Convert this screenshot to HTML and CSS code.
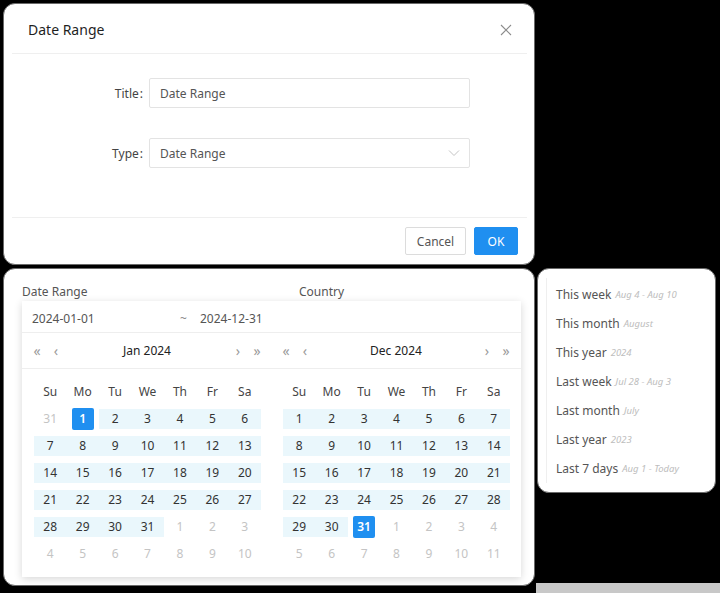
FILE: index.html
```html
<!DOCTYPE html>
<html lang="en">
<head>
<meta charset="utf-8">
<title>Date Range</title>
<link rel="stylesheet" href="styles.css">
</head>
<body>
<div class="page">
  <section class="card modal">
    <header class="modal-head">
      <span class="modal-title">Date Range</span>
      <svg class="close" width="12" height="12" viewBox="0 0 12 12"><path d="M1 1L11 11M11 1L1 11" stroke="#8c8c8c" stroke-width="1.1" fill="none"/></svg>
    </header>
    <div class="divider"></div>
    <div class="form">
      <div class="row"><span class="label">Title</span><div class="input">Date Range</div></div>
      <div class="row"><span class="label">Type</span><div class="input select">Date Range<svg class="chev" width="12" height="8" viewBox="0 0 12 8"><path d="M1 1.5L6 6.5L11 1.5" stroke="#c4c4c4" stroke-width="1" fill="none"/></svg></div></div>
    </div>
    <div class="divider"></div>
    <footer class="modal-foot">
      <button class="btn">Cancel</button>
      <button class="btn primary">OK</button>
    </footer>
  </section>

  <div class="bottom">
    <section class="card filter">
      <div class="labels"><span class="flabel">Date Range</span><span class="flabel country">Country</span></div>
      <div class="picker">
        <div class="range-inputs"><span class="ri">2024-01-01</span><span class="tilde">~</span><span class="ri">2024-12-31</span></div>
        <div class="panels-head">
          <div class="phead"><span class="nav">«</span><span class="nav">‹</span><span class="ptitle">Jan 2024</span><span class="nav">›</span><span class="nav">»</span></div>
          <div class="phead"><span class="nav">«</span><span class="nav">‹</span><span class="ptitle">Dec 2024</span><span class="nav">›</span><span class="nav">»</span></div>
        </div>
        <div class="panels">
          <div class="grid">
            <span class="wd">Su</span><span class="wd">Mo</span><span class="wd">Tu</span><span class="wd">We</span><span class="wd">Th</span><span class="wd">Fr</span><span class="wd">Sa</span>
            <span class="d out">31</span><span class="d sel"><b>1</b></span><span class="d in">2</span><span class="d in">3</span><span class="d in">4</span><span class="d in">5</span><span class="d in">6</span>
            <span class="d in">7</span><span class="d in">8</span><span class="d in">9</span><span class="d in">10</span><span class="d in">11</span><span class="d in">12</span><span class="d in">13</span>
            <span class="d in">14</span><span class="d in">15</span><span class="d in">16</span><span class="d in">17</span><span class="d in">18</span><span class="d in">19</span><span class="d in">20</span>
            <span class="d in">21</span><span class="d in">22</span><span class="d in">23</span><span class="d in">24</span><span class="d in">25</span><span class="d in">26</span><span class="d in">27</span>
            <span class="d in">28</span><span class="d in">29</span><span class="d in">30</span><span class="d in">31</span><span class="d out">1</span><span class="d out">2</span><span class="d out">3</span>
            <span class="d out">4</span><span class="d out">5</span><span class="d out">6</span><span class="d out">7</span><span class="d out">8</span><span class="d out">9</span><span class="d out">10</span>
          </div>
          <div class="grid">
            <span class="wd">Su</span><span class="wd">Mo</span><span class="wd">Tu</span><span class="wd">We</span><span class="wd">Th</span><span class="wd">Fr</span><span class="wd">Sa</span>
            <span class="d in">1</span><span class="d in">2</span><span class="d in">3</span><span class="d in">4</span><span class="d in">5</span><span class="d in">6</span><span class="d in">7</span>
            <span class="d in">8</span><span class="d in">9</span><span class="d in">10</span><span class="d in">11</span><span class="d in">12</span><span class="d in">13</span><span class="d in">14</span>
            <span class="d in">15</span><span class="d in">16</span><span class="d in">17</span><span class="d in">18</span><span class="d in">19</span><span class="d in">20</span><span class="d in">21</span>
            <span class="d in">22</span><span class="d in">23</span><span class="d in">24</span><span class="d in">25</span><span class="d in">26</span><span class="d in">27</span><span class="d in">28</span>
            <span class="d in">29</span><span class="d in">30</span><span class="d sel"><b>31</b></span><span class="d out">1</span><span class="d out">2</span><span class="d out">3</span><span class="d out">4</span>
            <span class="d out">5</span><span class="d out">6</span><span class="d out">7</span><span class="d out">8</span><span class="d out">9</span><span class="d out">10</span><span class="d out">11</span>
          </div>
        </div>
      </div>
    </section>

    <aside class="side">
      <div class="card presets">
        <ul class="plist">
          <li>This week <em>Aug 4 - Aug 10</em></li>
          <li>This month <em>August</em></li>
          <li>This year <em>2024</em></li>
          <li>Last week <em>Jul 28 - Aug 3</em></li>
          <li>Last month <em>July</em></li>
          <li>Last year <em>2023</em></li>
          <li>Last 7 days <em>Aug 1 - Today</em></li>
        </ul>
      </div>
      <div class="strip"></div>
    </aside>
  </div>
</div>
</body>
</html>
```

FILE: styles.css
```css
* { box-sizing: border-box; }
html, body { margin: 0; padding: 0; }
body {
  background: #000;
  width: 720px;
  height: 593px;
  overflow: hidden;
  font-family: "Noto Sans", "Open Sans", sans-serif;
  color: #333;
}
.page { padding: 3px 0 0 3px; }

.card {
  background: #fff;
  border: 1px solid #6a6a6a;
  border-radius: 12px;
}

/* ---------- modal ---------- */
.modal {
  width: 532px;
  height: 262px;
  display: flex;
  flex-direction: column;
}
.modal-head {
  height: 49px;
  display: flex;
  align-items: center;
  justify-content: space-between;
  padding: 2px 22px 0 24px;
}
.modal-title { font-size: 14px; font-weight: 400; color: #1f1f1f; }
.divider { height: 1px; background: #efefef; margin: 0 7px 0 8px; }
.form {
  height: 163px;
  padding-top: 24px;
  display: flex;
  flex-direction: column;
  gap: 30px;
}
.row { display: flex; align-items: center; height: 30px; }
.label {
  width: 145px;
  flex-shrink: 0;
  text-align: right;
  font-size: 12px;
  color: #444;
  padding-right: 6px;
}
.label::after { content: ":"; margin-left: 1px; }
.input {
  width: 321px;
  height: 30px;
  border: 1px solid #e3e3e3;
  border-radius: 2px;
  font-size: 12px;
  color: #555;
  display: flex;
  align-items: center;
  padding: 0 10px;
}
.select { justify-content: space-between; padding-right: 9px; }
.modal-foot {
  flex: 1;
  display: flex;
  justify-content: flex-end;
  align-items: flex-start;
  gap: 8px;
  padding: 9px 16px 0 0;
}
.btn {
  height: 28px;
  font-family: inherit;
  font-size: 12px;
  border-radius: 2px;
  border: 1px solid #dcdcdc;
  background: #fff;
  color: #555;
  padding: 0;
  width: 61px;
}
.btn.primary {
  background: #1f8ff0;
  border-color: #1f8ff0;
  color: #fff;
  width: 44px;
}

/* ---------- bottom ---------- */
.bottom { display: flex; gap: 2px; margin-top: 3px; }
.filter {
  width: 532px;
  height: 318px;
  padding: 12px 0 0 18px;
}
.labels { display: flex; height: 20px; align-items: center; }
.flabel { font-size: 12px; color: #555; width: 277px; flex-shrink: 0; }
.picker {
  width: 499px;
  height: 276px;
  background: #fff;
  box-shadow: 0 2px 8px rgba(0,0,0,0.16);
}
.range-inputs {
  height: 32px;
  display: flex;
  align-items: center;
  padding: 4px 0 0 10px;
  font-size: 12px;
  color: #555;
  border-bottom: 1px solid #eeeeee;
}
.ri:first-child { width: 148px; }
.tilde { width: 20px; color: #888; }
.panels-head {
  display: flex;
  height: 36px;
  border-bottom: 1px solid #eeeeee;
}
.phead {
  width: 249px;
  display: flex;
  align-items: center;
  padding: 0 7px 0 8px;
  gap: 5px;
}
.nav { width: 14px; text-align: center; color: #9a9a9a; font-size: 14px; line-height: 1; }
.ptitle { flex: 1; text-align: center; font-size: 12px; font-weight: 400; color: #222; }
.panels { display: flex; padding-top: 9px; }
.grid {
  width: 249px;
  padding: 0 10px 0 12px;
  display: grid;
  grid-template-columns: repeat(7, 1fr);
  grid-auto-rows: 27px;
}
.wd, .d {
  display: flex;
  align-items: center;
  justify-content: center;
  font-size: 12px;
  color: #333;
}
.wd { color: #444; }
.d.out { color: #c4c4c4; }
.d.in {
  background: #eaf7fc;
  background-clip: content-box;
  padding: 3.5px 0;
}
.d.sel b {
  width: 22px;
  height: 22px;
  background: #1f8ff0;
  color: #fff;
  border-radius: 2px;
  display: flex;
  align-items: center;
  justify-content: center;
  font-weight: 600;
}

/* ---------- presets ---------- */
.side {
  width: 183px;
  height: 325px;
  display: flex;
  flex-direction: column;
}
.presets {
  width: 179px;
  height: 225px;
  padding: 9px 0 0 8px;
}
.plist {
  list-style: none;
  margin: 0;
  padding: 2px 0 10px 9px;
  border-left: 1px solid #efefef;
  height: 205px;
}
.plist li {
  height: 29px;
  display: flex;
  align-items: center;
  gap: 4px;
  font-size: 12px;
  color: #555;
  white-space: nowrap;
}
.plist em { font-size: 9.5px; color: #bdbdbd; }
.strip { margin-top: auto; height: 10px; background: #c8c8c8; margin-left: -1px; }
```
